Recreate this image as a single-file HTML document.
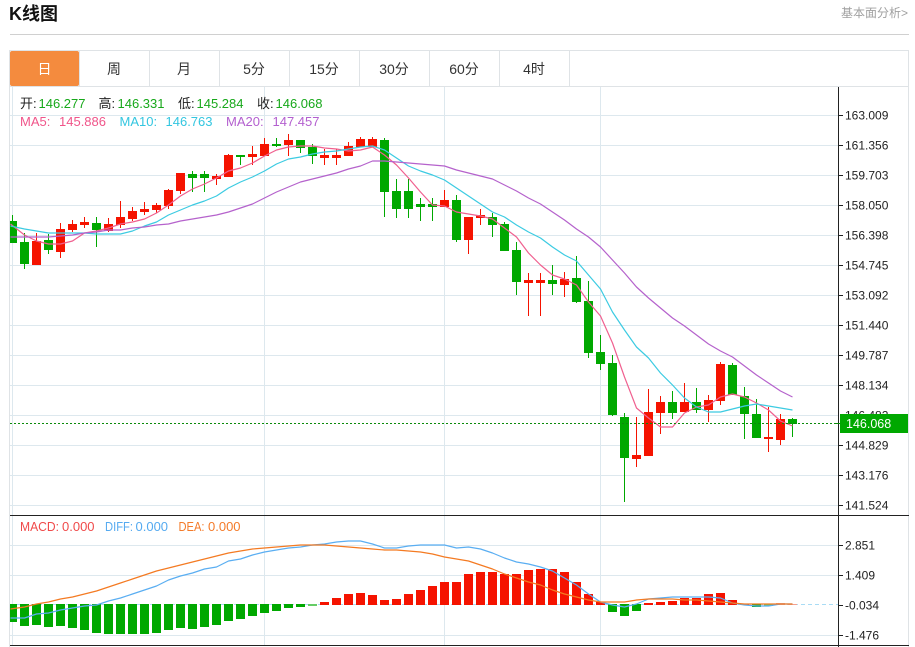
<!DOCTYPE html>
<html><head><meta charset="utf-8"><style>
html,body{margin:0;padding:0;background:#fff;width:915px;height:647px;overflow:hidden}
svg{display:block}
text{font-family:"Liberation Sans","Noto Sans CJK SC",sans-serif}
</style></head><body>
<svg width="915" height="647" viewBox="0 0 915 647" xmlns="http://www.w3.org/2000/svg">
<text x="9" y="20" font-size="18" font-weight="bold" fill="#111">K线图</text>
<text x="908" y="17" font-size="12" fill="#a0a0a0" text-anchor="end">基本面分析&gt;</text>
<rect x="10" y="34" width="899" height="1" fill="#d0d0d0"/>
<!-- frame and tabs -->
<g fill="#dfe3e6" shape-rendering="crispEdges">
<rect x="9" y="50" width="900" height="1"/><rect x="9" y="86" width="900" height="1"/>
<rect x="9" y="50" width="1" height="597"/><rect x="908" y="50" width="1" height="597"/>
<rect x="79" y="51" width="1" height="35"/><rect x="149" y="51" width="1" height="35"/><rect x="219" y="51" width="1" height="35"/><rect x="289" y="51" width="1" height="35"/><rect x="359" y="51" width="1" height="35"/><rect x="429" y="51" width="1" height="35"/><rect x="499" y="51" width="1" height="35"/><rect x="569" y="51" width="1" height="35"/>
</g>
<rect x="10" y="51" width="69" height="35" rx="2" fill="#f48b3e"/>
<g font-size="14" text-anchor="middle" fill="#333">
<text x="44.5" y="74" fill="#fff">日</text><text x="114" y="74">周</text><text x="184" y="74">月</text><text x="254" y="74">5分</text><text x="324" y="74">15分</text><text x="394" y="74">30分</text><text x="464" y="74">60分</text><text x="534" y="74">4时</text>
</g>
<!-- grid -->
<g fill="#dde8ee" shape-rendering="crispEdges">
<rect x="10" y="115" width="828" height="1"/><rect x="10" y="145" width="828" height="1"/><rect x="10" y="175" width="828" height="1"/><rect x="10" y="205" width="828" height="1"/><rect x="10" y="235" width="828" height="1"/><rect x="10" y="265" width="828" height="1"/><rect x="10" y="295" width="828" height="1"/><rect x="10" y="325" width="828" height="1"/><rect x="10" y="355" width="828" height="1"/><rect x="10" y="385" width="828" height="1"/><rect x="10" y="415" width="828" height="1"/><rect x="10" y="445" width="828" height="1"/><rect x="10" y="475" width="828" height="1"/><rect x="10" y="505" width="828" height="1"/>
<rect x="10" y="545" width="828" height="1"/><rect x="10" y="575" width="828" height="1"/><rect x="10" y="635" width="828" height="1"/>
<rect x="12" y="87" width="1" height="558"/><rect x="264" y="87" width="1" height="558"/><rect x="444" y="87" width="1" height="558"/><rect x="600" y="87" width="1" height="558"/>
</g>
<!-- candles -->
<path shape-rendering="crispEdges" fill="#00a800" d="M10 221h7v22h-7zM12 215h1v28h-1zM20 242h9v22h-9zM24 233h1v36h-1zM44 240h9v10h-9zM48 234h1v20h-1zM92 223h9v7h-9zM96 217h1v30h-1zM188 174h9v4h-9zM192 171h1v21h-1zM200 174h9v4h-9zM204 171h1v21h-1zM236 155h9v2h-9zM240 155h1v10h-1zM272 144h9v2h-9zM276 138h1v9h-1zM296 140h9v8h-9zM300 140h1v13h-1zM308 147h9v9h-9zM312 144h1v20h-1zM380 140h9v52h-9zM384 138h1v79h-1zM392 191h9v18h-9zM396 179h1v39h-1zM404 191h9v18h-9zM408 179h1v39h-1zM416 204h9v3h-9zM420 198h1v23h-1zM428 204h9v3h-9zM432 198h1v23h-1zM452 200h9v40h-9zM456 195h1v47h-1zM488 217h9v8h-9zM492 213h1v24h-1zM500 224h9v27h-9zM504 222h1v29h-1zM512 250h9v32h-9zM516 242h1v53h-1zM548 280h9v4h-9zM552 265h1v30h-1zM572 278h9v24h-9zM576 256h1v47h-1zM584 301h9v52h-9zM588 281h1v77h-1zM596 352h9v12h-9zM600 335h1v35h-1zM608 363h9v52h-9zM612 355h1v61h-1zM620 417h9v41h-9zM624 413h1v89h-1zM668 402h9v11h-9zM672 391h1v28h-1zM692 402h9v8h-9zM696 388h1v25h-1zM728 365h9v30h-9zM732 363h1v32h-1zM740 396h9v18h-9zM744 387h1v52h-1zM752 414h9v24h-9zM756 399h1v39h-1zM788 419h9v5h-9zM792 418h1v19h-1z"/>
<path shape-rendering="crispEdges" fill="#f51300" d="M32 241h9v24h-9zM36 233h1v32h-1zM56 229h9v23h-9zM60 223h1v35h-1zM68 224h9v6h-9zM72 220h1v12h-1zM80 222h9v3h-9zM84 217h1v11h-1zM104 224h9v7h-9zM108 218h1v14h-1zM116 217h9v8h-9zM120 201h1v27h-1zM128 211h9v8h-9zM132 207h1v14h-1zM140 209h9v3h-9zM144 202h1v13h-1zM152 205h9v5h-9zM156 203h1v10h-1zM164 190h9v16h-9zM168 189h1v20h-1zM176 173h9v18h-9zM180 173h1v21h-1zM212 176h9v3h-9zM216 174h1v11h-1zM224 155h9v22h-9zM228 154h1v23h-1zM248 154h9v3h-9zM252 146h1v19h-1zM260 144h9v12h-9zM264 138h1v18h-1zM284 140h9v5h-9zM288 134h1v22h-1zM320 155h9v3h-9zM324 149h1v16h-1zM332 155h9v3h-9zM336 149h1v16h-1zM344 146h9v10h-9zM348 142h1v14h-1zM356 139h9v8h-9zM360 137h1v10h-1zM368 139h9v8h-9zM372 137h1v10h-1zM440 200h9v7h-9zM444 190h1v17h-1zM464 217h9v23h-9zM468 217h1v37h-1zM476 215h9v3h-9zM480 209h1v16h-1zM524 280h9v3h-9zM528 273h1v43h-1zM536 280h9v3h-9zM540 273h1v43h-1zM560 279h9v6h-9zM564 272h1v25h-1zM632 455h9v4h-9zM636 417h1v50h-1zM644 412h9v44h-9zM648 389h1v67h-1zM656 402h9v11h-9zM660 396h1v38h-1zM680 402h9v10h-9zM684 383h1v29h-1zM704 400h9v10h-9zM708 395h1v27h-1zM716 364h9v37h-9zM720 362h1v43h-1zM764 437h9v2h-9zM768 407h1v45h-1zM776 419h9v21h-9zM780 414h1v31h-1z"/>
<!-- MA lines -->
<g fill="none" stroke-width="1.2" stroke-linejoin="round" transform="translate(.5 0)">
<polyline stroke="#f0608f" points="10,224 24,235 36,241 48,244 60,244 72,241 84,233 96,231 108,228 120,224 132,222 144,219 156,213 168,205 180,196 192,189 204,184 216,178 228,171 240,168 252,163 264,156 276,150 288,147 300,146 312,146 324,148 336,149 348,151 360,150 372,147 384,155 396,165 408,178 420,192 432,205 444,206 456,212 468,214 480,216 492,219 504,228 516,237 528,253 540,265 552,275 564,279 576,285 588,302 600,316 612,343 624,377 636,408 648,418 660,427 672,427 684,413 696,407 708,405 720,397 732,394 744,397 756,403 768,410 780,421 792,426"/>
<polyline stroke="#3ccbe2" points="10,226 24,229 36,231 48,233 60,233 72,233 84,233 96,234 108,234 120,234 132,231 144,226 156,222 168,215 180,210 192,205 204,201 216,196 228,188 240,182 252,177 264,171 276,164 288,159 300,157 312,154 324,152 336,151 348,149 360,147 372,146 384,150 396,158 408,166 420,171 432,175 444,180 456,188 468,196 480,204 492,212 504,217 516,225 528,232 540,238 552,247 564,255 576,261 588,275 600,289 612,312 624,330 636,347 648,358 660,373 672,385 684,398 696,407 708,412 720,412 732,409 744,406 756,404 768,406 780,408 792,410"/>
<polyline stroke="#b562cc" points="10,237 24,237 36,237 48,237 60,236 72,235 84,233 96,232 108,230 120,230 132,228 144,227 156,225 168,224 180,221 192,219 204,217 216,215 228,212 240,208 252,204 264,198 276,192 288,187 300,182 312,179 324,176 336,173 348,169 360,166 372,161 384,161 396,162 408,163 420,164 432,165 444,166 456,170 468,173 480,176 492,179 504,185 516,191 528,198 540,204 552,212 564,220 576,229 588,237 600,247 612,260 624,273 636,287 648,298 660,308 672,318 684,326 696,335 708,344 720,351 732,357 744,366 756,375 768,383 780,391 792,397"/>
</g>
<line x1="10" y1="423.5" x2="838" y2="423.5" stroke="#0a8a0a" stroke-dasharray="2 2"/>
<!-- MACD histogram -->
<line x1="10" y1="604.5" x2="838" y2="604.5" stroke="#a9dcf5" stroke-dasharray="4 3"/>
<path shape-rendering="crispEdges" fill="#00a800" d="M10 604h7v18h-7zM20 604h9v22h-9zM32 604h9v21h-9zM44 604h9v23h-9zM56 604h9v22h-9zM68 604h9v24h-9zM80 604h9v26h-9zM92 604h9v29h-9zM104 604h9v30h-9zM116 604h9v30h-9zM128 604h9v30h-9zM140 604h9v30h-9zM152 604h9v29h-9zM164 604h9v26h-9zM176 604h9v24h-9zM188 604h9v25h-9zM200 604h9v23h-9zM212 604h9v21h-9zM224 604h9v17h-9zM236 604h9v15h-9zM248 604h9v12h-9zM260 604h9v9h-9zM272 604h9v7h-9zM284 604h9v4h-9zM296 604h9v3h-9zM608 604h9v8h-9zM620 604h9v12h-9zM632 604h9v7h-9zM752 604h9v3h-9z"/>
<path shape-rendering="crispEdges" fill="#66cc66" d="M308 604h9v2h-9zM764 604h9v2h-9z"/>
<path shape-rendering="crispEdges" fill="#f51300" d="M320 602h9v3h-9zM332 598h9v7h-9zM344 594h9v11h-9zM356 593h9v12h-9zM368 595h9v10h-9zM380 600h9v5h-9zM392 599h9v6h-9zM404 594h9v11h-9zM416 590h9v15h-9zM428 586h9v19h-9zM440 582h9v23h-9zM452 582h9v23h-9zM464 574h9v31h-9zM476 572h9v33h-9zM488 572h9v33h-9zM500 574h9v31h-9zM512 574h9v31h-9zM524 570h9v35h-9zM536 569h9v36h-9zM548 569h9v36h-9zM560 572h9v33h-9zM572 582h9v23h-9zM584 594h9v11h-9zM596 602h9v3h-9zM644 603h9v2h-9zM656 602h9v3h-9zM668 601h9v4h-9zM680 598h9v7h-9zM692 598h9v7h-9zM704 594h9v11h-9zM716 593h9v12h-9zM728 600h9v5h-9zM740 604h9v1h-9z"/>
<path shape-rendering="crispEdges" fill="#f4a090" d="M776 603h9v2h-9zM788 604h9v1h-9z"/>
<g fill="none" stroke-width="1.2" stroke-linejoin="round" transform="translate(.5 0)">
<polyline stroke="#5aaef2" points="10,618 24,618 36,614 48,613 60,610 72,608 84,606 96,605 108,601 120,598 132,594 144,590 156,586 168,580 180,576 192,573 204,569 216,567 228,561 240,559 252,555 264,552 276,550 288,548 300,547 312,545 324,544 336,542 348,541 360,541 372,544 384,548 396,548 408,546 420,545 432,545 444,545 456,548 468,547 480,549 492,553 504,558 516,562 528,564 540,567 552,571 564,578 576,585 588,594 600,602 612,605 624,607 636,604 648,599 660,598 672,597 684,597 696,597 708,597 720,598 732,603 744,605 756,606 768,606 780,604 792,604"/>
<polyline stroke="#f47a22" points="10,609 24,607 36,604 48,602 60,599 72,597 84,594 96,591 108,587 120,583 132,579 144,575 156,571 168,568 180,565 192,562 204,559 216,556 228,553 240,551 252,549 264,548 276,547 288,546 300,545 312,545 324,545 336,546 348,547 360,548 372,549 384,550 396,550 408,551 420,552 432,554 444,557 456,559 468,561 480,565 492,569 504,574 516,578 528,582 540,585 552,590 564,594 576,597 588,600 600,602 612,602 624,602 636,600 648,599 660,599 672,599 684,600 696,600 708,601 720,602 732,603 744,604 756,604 768,604 780,604 792,604"/>
</g>
<!-- axes -->
<g fill="#222" shape-rendering="crispEdges">
<rect x="10" y="515" width="899" height="1"/><rect x="10" y="645" width="899" height="1"/>
<rect x="838" y="87" width="1" height="560"/>
<rect x="839" y="115" width="4" height="1"/><rect x="839" y="145" width="4" height="1"/><rect x="839" y="175" width="4" height="1"/><rect x="839" y="205" width="4" height="1"/><rect x="839" y="235" width="4" height="1"/><rect x="839" y="265" width="4" height="1"/><rect x="839" y="295" width="4" height="1"/><rect x="839" y="325" width="4" height="1"/><rect x="839" y="355" width="4" height="1"/><rect x="839" y="385" width="4" height="1"/><rect x="839" y="445" width="4" height="1"/><rect x="839" y="475" width="4" height="1"/><rect x="839" y="505" width="4" height="1"/><rect x="839" y="545" width="4" height="1"/><rect x="839" y="575" width="4" height="1"/><rect x="839" y="605" width="4" height="1"/><rect x="839" y="635" width="4" height="1"/>
</g>
<g font-size="12" fill="#222">
<text x="845" y="119.500">163.009</text><text x="845" y="149.500">161.356</text><text x="845" y="179.500">159.703</text><text x="845" y="209.500">158.050</text><text x="845" y="239.500">156.398</text><text x="845" y="269.500">154.745</text><text x="845" y="299.500">153.092</text><text x="845" y="329.500">151.440</text><text x="845" y="359.500">149.787</text><text x="845" y="389.500">148.134</text><text x="845" y="419.500">146.482</text><text x="845" y="449.500">144.829</text><text x="845" y="479.500">143.176</text><text x="845" y="509.500">141.524</text>
<text x="845" y="549.500">2.851</text><text x="845" y="579.500">1.409</text><text x="845" y="609.500">-0.034</text><text x="845" y="639.500">-1.476</text>
</g>
<rect x="840" y="414" width="68" height="19" fill="#00a800"/>
<rect x="835" y="423" width="5" height="1" fill="#0a8a0a"/>
<text x="846" y="428" font-size="12.500" fill="#fff">146.068</text>
<!-- info -->
<g font-size="13">
<text x="20" y="108" fill="#222">开:</text><text x="38.500" y="108" fill="#17a81a">146.277</text>
<text x="98.500" y="108" fill="#222">高:</text><text x="117.500" y="108" fill="#17a81a">146.331</text>
<text x="178" y="108" fill="#222">低:</text><text x="196.500" y="108" fill="#17a81a">145.284</text>
<text x="257" y="108" fill="#222">收:</text><text x="275.500" y="108" fill="#17a81a">146.068</text>
<text x="20" y="126" fill="#f0558a">MA5:</text><text x="59" y="126" fill="#f0558a">145.886</text>
<text x="119.500" y="126" fill="#33c6e0">MA10:</text><text x="165.500" y="126" fill="#33c6e0">146.763</text>
<text x="226" y="126" fill="#b35fcf">MA20:</text><text x="272.500" y="126" fill="#b35fcf">147.457</text>
<text x="20" y="531" fill="#f04a4a" textLength="39" lengthAdjust="spacingAndGlyphs">MACD:</text><text x="62" y="531" fill="#f04a4a">0.000</text>
<text x="105" y="531" fill="#55aaf0" textLength="28" lengthAdjust="spacingAndGlyphs">DIFF:</text><text x="135.500" y="531" fill="#55aaf0">0.000</text>
<text x="178.500" y="531" fill="#f47b2a" textLength="26" lengthAdjust="spacingAndGlyphs">DEA:</text><text x="208" y="531" fill="#f47b2a">0.000</text>
</g>
</svg>
</body></html>
